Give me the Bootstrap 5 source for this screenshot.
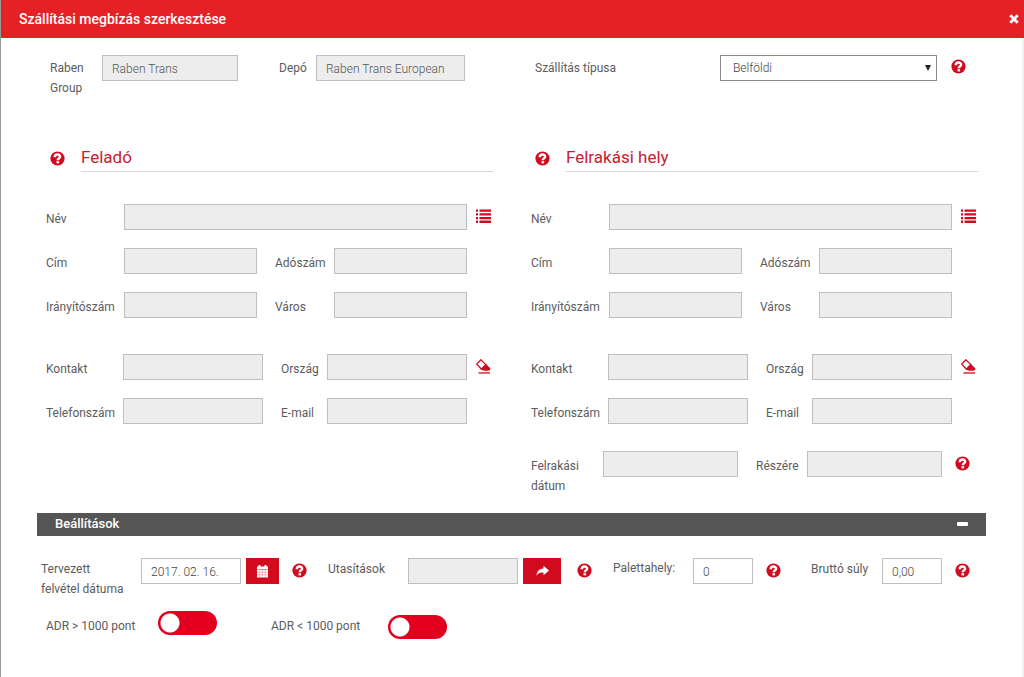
<!DOCTYPE html>
<html lang="hu">
<head>
<meta charset="utf-8">
<meta name="viewport" content="width=device-width, initial-scale=1">
<title>Szállítási megbízás szerkesztése</title>
<link href="https://cdn.jsdelivr.net/npm/bootstrap@5.3.0/dist/css/bootstrap.min.css" rel="stylesheet">
<style>
  :root { --brand: #e62125; --accent: #d20a1e; --heading: #c8202f; --line: #bfbfbf; }
  body { font: 400 12px/20px Roboto, "Liberation Sans", sans-serif; color: #5c5c5c; background: #fff; }
  .dialog { min-height: 100vh; border-left: 1px solid #999; border-right: 2px solid #f0f0f0; }
  .dialog-head { padding: 9px 5px 9px 18px; margin-right: -2px; background: var(--brand); color: #fff; }
  .dialog-head h1 { font-size: 14px; line-height: 20px; font-weight: 500; margin: 0; }
  .bar-title { font-size: 13px; line-height: 20px; font-weight: 500; margin: 0; }
  .plain-btn { border: 0; background: none; padding: 0; color: inherit; line-height: 0; flex: none; }
  .dialog-main { padding: 17px 44px 0 45px; }
  .pair { --bs-gutter-x: 38px; }
  .line { display: flex; align-items: flex-start; }
  .line + .line { margin-top: 18px; }
  .line.apart { margin-top: 36px; }
  .line.dates { margin-top: 27px; }
  .line label, .switches label { flex: none; padding-top: 5px; }
  .top-line label { padding-top: 3px; }
  .settings label { padding-top: 1px; }
  .form-control, .form-select {
    flex: 1 1 100px; min-width: 0; width: auto; height: 26px; padding: 1px 9px 0; border: 1px solid var(--line); border-radius: 0;
    font-size: 12px; line-height: 20px; font-weight: 300; color: #444; background-color: #fff;
  }
  .form-control:disabled { background-color: #ededed; color: #555; opacity: 1; }
  .form-select {
    padding: 0 20px 0 12px; border-color: #8c8c8c;
    background: #fff url("data:image/svg+xml,%3Csvg xmlns='http://www.w3.org/2000/svg' viewBox='0 0 6 6'%3E%3Cpath d='M0 0h6L3 6z' fill='%23222'/%3E%3C/svg%3E") no-repeat right 5px center / 6px 6px;
  }
  .side { flex: none; width: 26px; padding: 5px 0 0 9px; color: var(--accent); line-height: 0; }
  .top-line .side { width: 28px; }
  .help { margin-top: 5px; margin-left: 13px; color: var(--accent); }
  .top-line .help { margin-top: 4px; margin-left: 14px; margin-right: 12px; }
  .dates .help { margin-right: 8px; }
  .side svg, .help svg { display: block; width: 15px; height: 15px; }
  .group-head { margin-top: 46px; margin-bottom: 32px; padding-left: 4px; }
  .group-head h2 { flex: 1; margin: 0 0 0 16px; font-size: 17px; line-height: 27px; font-weight: 400; color: var(--heading); border-bottom: 1px solid #d9d9d9; }
  .group-head .help { margin-top: 7px; margin-left: 0; }
  .w-a { width: 78px; } .w-b { width: 77px; } .w-c { width: 59px; } .w-d { width: 46px; }
  .w-e { width: 52px; } .w-f { width: 37px; } .w-g { width: 72px; } .w-h { width: 51px; }
  .w-i { width: 100px; } .w-j { width: 80px; } .w-k { width: 71px; } .w-l { width: 185px; }
  .w-m { width: 112px; } .w-n { width: 117px; }
  .gap-s { margin-left: 18px; } .gap-m { margin-left: 21px; } .gap-l { margin-left: 30px; }
  .gap-xl { margin-left: 41px; } .gap-xxl { margin-left: 54px; }
  .section-bar { margin: 17px -8px 22px -9px; padding: 1px 18px 2px; background: #555; color: #fff; }
  .settings { margin-left: -5px; margin-right: 8px; }
  .action { flex: none; height: 26px; width: 33px; margin-left: 5px; padding: 0; border: 0; border-radius: 0; background: var(--accent); color: #fff; line-height: 0; }
  .action-wide { width: 38px; }
  .form-control.f-110 { flex: 110 1 110px; } .form-control.f-100 { flex: 100 1 100px; } .form-control.f-60 { flex: 60 1 60px; }
  .form-control.f-136 { flex: 136 1 136px; } .form-control.f-149 { flex: 149 1 149px; }
  .switches { margin-top: 12px; }
  .toggle {
    appearance: none; flex: none; width: 59px; height: 24px; margin: 0; border: 0; border-radius: 12px;
    background: #e2001e radial-gradient(circle at 12px 50%, #fff 9px, transparent 10px);
  }
  .toggle:checked { background-image: radial-gradient(circle at 47px 50%, #fff 9px, transparent 10px); }
</style>
</head>
<body>
<svg class="d-none" aria-hidden="true">
  <symbol id="i-help" viewBox="0 0 15 15"><circle cx="7.5" cy="7.5" r="7.1" fill="currentColor"/><path d="M4.800 6.200c0-3.500 5.300-3.300 5.300-.5 0 1.700-2.300 1.600-2.300 3.600" fill="none" stroke="#fff" stroke-width="2.500"/><path d="M6.500 10.200h2.600v2.200H6.500z" fill="#fff"/></symbol>
  <symbol id="i-list" viewBox="0 0 15 15"><path d="M0 .5h2v2.300H0zM3.500 .5H15v2.300H3.500zM0 4.200h2v2.300H0zM3.500 4.200H15v2.300H3.500zM0 7.900h2v2.300H0zM3.500 7.900H15v2.300H3.500zM0 11.600h2v2.300H0zM3.500 11.600H15v2.300H3.500z" fill="currentColor"/></symbol>
  <symbol id="i-eraser" viewBox="0 0 15 15"><path d="M4.900.8.8 5.100l4.700 5.200 4.600-4.400z" fill="#fff" stroke="currentColor" stroke-width="1.300"/><path d="M9.600 4.700 14.300 9.200c.5.900-.5 2.500-2 2.500H8.300c-1 0-2.400-.9-3.400-2z" fill="currentColor"/><path d="M2.500 13.300h11.500v1.300H2.500z" fill="currentColor"/></symbol>
</svg>

<div class="dialog">
  <header class="dialog-head d-flex align-items-center justify-content-between">
    <h1>Szállítási megbízás szerkesztése</h1>
    <button type="button" class="plain-btn" aria-label="Bezárás"><svg width="10" height="10" viewBox="0 0 10 10"><path d="m1.300 1.300 7.400 7.400m0-7.400L1.300 8.700" stroke="#fff" stroke-width="2.800"/></svg></button>
  </header>

  <form class="dialog-main">
    <div class="row pair">
      <div class="col-lg-6">
        <div class="line top-line ps-1">
          <label class="w-e" for="company">Raben Group</label>
          <input class="form-control f-136" id="company" value="Raben Trans" disabled>
          <label class="w-f gap-xl" for="depot">Depó</label>
          <input class="form-control f-149" id="depot" value="Raben Trans European" disabled>
          <span class="side"></span>
        </div>
      </div>
      <div class="col-lg-6">
        <div class="line top-line ps-1">
          <label class="w-l" for="kind">Szállítás típusa</label>
          <select class="form-select" id="kind"><option>Belföldi</option></select>
          <button type="button" class="plain-btn help" aria-label="Súgó"><svg><use href="#i-help"/></svg></button>
        </div>
      </div>
    </div>

    <div class="row pair">
      <section class="col-lg-6">
        <div class="group-head d-flex align-items-start">
          <button type="button" class="plain-btn help" aria-label="Súgó"><svg><use href="#i-help"/></svg></button>
          <h2>Feladó</h2>
        </div>
        <div class="line">
          <label class="w-a" for="s-name">Név</label><input class="form-control" id="s-name" disabled>
          <button type="button" class="plain-btn side" aria-label="Lista"><svg><use href="#i-list"/></svg></button>
        </div>
        <div class="line">
          <label class="w-a" for="s-addr">Cím</label><input class="form-control" id="s-addr" disabled>
          <label class="w-c gap-s" for="s-tax">Adószám</label><input class="form-control" id="s-tax" disabled><span class="side"></span>
        </div>
        <div class="line">
          <label class="w-a" for="s-zip">Irányítószám</label><input class="form-control" id="s-zip" disabled>
          <label class="w-c gap-s" for="s-city">Város</label><input class="form-control" id="s-city" disabled><span class="side"></span>
        </div>
        <div class="line apart">
          <label class="w-b" for="s-contact">Kontakt</label><input class="form-control" id="s-contact" disabled>
          <label class="w-d gap-s" for="s-country">Ország</label><input class="form-control" id="s-country" disabled>
          <button type="button" class="plain-btn side" aria-label="Törlés"><svg><use href="#i-eraser"/></svg></button>
        </div>
        <div class="line">
          <label class="w-b" for="s-phone">Telefonszám</label><input class="form-control" id="s-phone" disabled>
          <label class="w-d gap-s" for="s-mail">E-mail</label><input class="form-control" id="s-mail" disabled><span class="side"></span>
        </div>
      </section>

      <section class="col-lg-6">
        <div class="group-head d-flex align-items-start">
          <button type="button" class="plain-btn help" aria-label="Súgó"><svg><use href="#i-help"/></svg></button>
          <h2>Felrakási hely</h2>
        </div>
        <div class="line">
          <label class="w-a" for="p-name">Név</label><input class="form-control" id="p-name" disabled>
          <button type="button" class="plain-btn side" aria-label="Lista"><svg><use href="#i-list"/></svg></button>
        </div>
        <div class="line">
          <label class="w-a" for="p-addr">Cím</label><input class="form-control" id="p-addr" disabled>
          <label class="w-c gap-s" for="p-tax">Adószám</label><input class="form-control" id="p-tax" disabled><span class="side"></span>
        </div>
        <div class="line">
          <label class="w-a" for="p-zip">Irányítószám</label><input class="form-control" id="p-zip" disabled>
          <label class="w-c gap-s" for="p-city">Város</label><input class="form-control" id="p-city" disabled><span class="side"></span>
        </div>
        <div class="line apart">
          <label class="w-b" for="p-contact">Kontakt</label><input class="form-control" id="p-contact" disabled>
          <label class="w-d gap-s" for="p-country">Ország</label><input class="form-control" id="p-country" disabled>
          <button type="button" class="plain-btn side" aria-label="Törlés"><svg><use href="#i-eraser"/></svg></button>
        </div>
        <div class="line">
          <label class="w-b" for="p-phone">Telefonszám</label><input class="form-control" id="p-phone" disabled>
          <label class="w-d gap-s" for="p-mail">E-mail</label><input class="form-control" id="p-mail" disabled><span class="side"></span>
        </div>
        <div class="line dates">
          <label class="w-g" for="p-date">Felrakási<br>dátum</label><input class="form-control" id="p-date" disabled>
          <label class="w-h gap-s" for="p-for">Részére</label><input class="form-control" id="p-for" disabled>
          <button type="button" class="plain-btn help" aria-label="Súgó"><svg><use href="#i-help"/></svg></button>
        </div>
      </section>
    </div>

    <div class="section-bar d-flex align-items-center justify-content-between">
      <h2 class="bar-title">Beállítások</h2>
      <button type="button" class="plain-btn" aria-label="Összecsukás"><svg width="11" height="4"><rect width="11" height="4" rx="1" fill="#fff"/></svg></button>
    </div>

    <div class="line settings">
      <label class="w-i" for="plan">Tervezett<br>felvétel dátuma</label>
      <input class="form-control f-100" id="plan" value="2017. 02. 16.">
      <button type="button" class="action" aria-label="Naptár"><svg width="13" height="13" viewBox="0 0 13 13"><path d="M1 1.500h1.500V0h2v1.500h4V0h2v1.500H12V4H1zM1 4.600h11V12.500H1z" fill="#fff"/><path d="M1 7.200h11M1 9.800h11M3.700 5v7.500M6.500 5v7.500M9.300 5v7.500" stroke="#d20a1e" stroke-width=".25"/></svg></button>
      <button type="button" class="plain-btn help" aria-label="Súgó"><svg><use href="#i-help"/></svg></button>
      <label class="w-j gap-m" for="orders">Utasítások</label>
      <input class="form-control f-110" id="orders" disabled>
      <button type="button" class="action action-wide" aria-label="Továbbítás"><svg width="13" height="12" viewBox="0 0 13 12"><path d="M7.500 .8 13 5.500 7.500 10.200V7.600C4 7.300 2 8.200.5 10.800.7 6.500 3 3.600 7.500 3.400z" fill="#fff"/></svg></button>
      <button type="button" class="plain-btn help ms-3" aria-label="Súgó"><svg><use href="#i-help"/></svg></button>
      <label class="w-j gap-m pt-0" for="pallets">Palettahely:</label>
      <input class="form-control f-60" id="pallets" value="0">
      <button type="button" class="plain-btn help" aria-label="Súgó"><svg><use href="#i-help"/></svg></button>
      <label class="w-k gap-l" for="gross">Bruttó súly</label>
      <input class="form-control f-60" id="gross" value="0,00">
      <button type="button" class="plain-btn help" aria-label="Súgó"><svg><use href="#i-help"/></svg></button>
    </div>

    <div class="switches d-flex flex-wrap align-items-start">
      <label class="w-m" for="adr-over">ADR &gt; 1000 pont</label>
      <input type="checkbox" role="switch" class="toggle" id="adr-over">
      <label class="w-n gap-xxl" for="adr-under">ADR &lt; 1000 pont</label>
      <input type="checkbox" role="switch" class="toggle mt-1" id="adr-under">
    </div>
  </form>
</div>
<script src="https://cdn.jsdelivr.net/npm/bootstrap@5.3.0/dist/js/bootstrap.bundle.min.js"></script>
</body>
</html>
